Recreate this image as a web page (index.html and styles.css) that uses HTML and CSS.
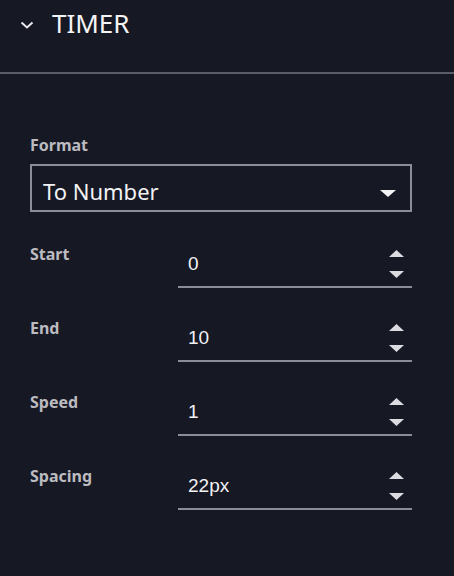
FILE: index.html
```html
<!DOCTYPE html>
<html lang="en">
<head>
    <meta charset="UTF-8">
    <meta name="viewport" content="width=device-width, initial-scale=1.0">
    <title>Timer</title>
    <link rel="stylesheet" href="styles.css">
</head>
<body>
    <div class="panel">
        <div class="panel-header">
            <svg class="chevron" width="14" height="8" viewBox="0 0 14 8">
                <path d="M1.5 1.5 L7 6.5 L12.5 1.5" fill="none" stroke="#e8e8ec" stroke-width="2"/>
            </svg>
            <h2 class="panel-title">TIMER</h2>
        </div>
        <div class="panel-body">
            <label class="field-label" for="format">Format</label>
            <div class="select" id="format">
                <span class="select-value">To Number</span>
                <svg class="select-arrow" width="16" height="7" viewBox="0 0 16 7">
                    <path d="M0 0 L16 0 L8 7 Z" fill="#f2f2f4"/>
                </svg>
            </div>

            <div class="row">
                <span class="row-label">Start</span>
                <div class="number-field">
                    <span class="number-value">0</span>
                    <svg class="spinner" width="15" height="28" viewBox="0 0 15 28">
                        <path d="M7.5 0 L15 7 L0 7 Z" fill="#dcdce0"/>
                        <path d="M0 21 L15 21 L7.5 28 Z" fill="#dcdce0"/>
                    </svg>
                </div>
            </div>
            <div class="row">
                <span class="row-label">End</span>
                <div class="number-field">
                    <span class="number-value">10</span>
                    <svg class="spinner" width="15" height="28" viewBox="0 0 15 28">
                        <path d="M7.5 0 L15 7 L0 7 Z" fill="#dcdce0"/>
                        <path d="M0 21 L15 21 L7.5 28 Z" fill="#dcdce0"/>
                    </svg>
                </div>
            </div>
            <div class="row">
                <span class="row-label">Speed</span>
                <div class="number-field">
                    <span class="number-value">1</span>
                    <svg class="spinner" width="15" height="28" viewBox="0 0 15 28">
                        <path d="M7.5 0 L15 7 L0 7 Z" fill="#dcdce0"/>
                        <path d="M0 21 L15 21 L7.5 28 Z" fill="#dcdce0"/>
                    </svg>
                </div>
            </div>
            <div class="row">
                <span class="row-label">Spacing</span>
                <div class="number-field">
                    <span class="number-value">22px</span>
                    <svg class="spinner" width="15" height="28" viewBox="0 0 15 28">
                        <path d="M7.5 0 L15 7 L0 7 Z" fill="#dcdce0"/>
                        <path d="M0 21 L15 21 L7.5 28 Z" fill="#dcdce0"/>
                    </svg>
                </div>
            </div>
        </div>
    </div>
</body>
</html>
```

FILE: styles.css
```css
html, body {
    margin: 0;
    height: 100%;
}

body {
    background-color: #161824;
    font-family: 'Noto Sans', sans-serif;
    color: #f0f0f2;
}

.panel {
    width: 100%;
}

.panel-header {
    display: flex;
    align-items: flex-start;
    height: 67px;
    padding: 5px 20px 0;
    border-bottom: 2px solid #5b5d68;
}

.chevron {
    display: block;
    margin-top: 16px;
}

.panel-title {
    margin: 0 0 0 18px;
    font-size: 26px;
    font-weight: 400;
    line-height: 36px;
    color: #f4f4f6;
}

.panel-body {
    padding: 60px 42px 0 30px;
}

.field-label, .row-label {
    display: block;
    font-size: 16px;
    font-weight: 700;
    line-height: 22px;
    color: #bcbcc0;
}

.field-label {
    margin-bottom: 8px;
}

.select {
    display: flex;
    align-items: flex-start;
    justify-content: space-between;
    height: 44px;
    padding: 0 14px 0 11px;
    border: 2px solid #8b8d97;
}

.select-value {
    margin-top: 10px;
    font-size: 22px;
    line-height: 30px;
    color: #f2f2f4;
}

.select-arrow {
    display: block;
    margin-top: 24px;
}

.row {
    display: flex;
    align-items: flex-start;
    margin-top: 29px;
}

.select + .row {
    margin-top: 31px;
}

.row-label {
    width: 148px;
    flex-shrink: 0;
}

.number-field {
    flex: 1;
    display: flex;
    align-items: center;
    justify-content: space-between;
    height: 41px;
    padding: 0 8px 2px 10px;
    border-bottom: 2px solid #8a8c98;
}

.number-value {
    font-family: 'Liberation Sans', Arial, sans-serif;
    font-size: 19px;
    line-height: 22px;
    color: #f2f2f4;
}

.spinner {
    display: block;
}
```
